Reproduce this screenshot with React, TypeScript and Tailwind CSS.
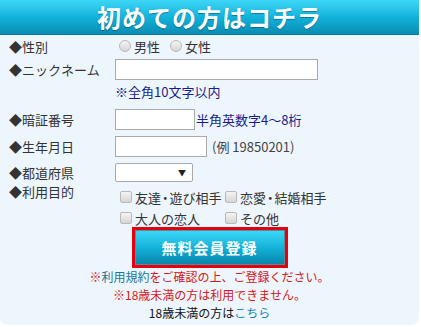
import type { ReactNode } from 'react';

const font = { fontFamily: '"Noto Sans CJK JP", "Liberation Sans", sans-serif' };

function Radio({ label }: { label: string }) {
  return (
    <span className="flex items-center gap-[3px] mr-[10px]">
      <span className="w-[12px] h-[12px] rounded-full border border-[#b9b9b9] bg-gradient-to-b from-[#f4f4f4] to-[#d6d6d6]" />
      <span>{label}</span>
    </span>
  );
}

function Check({ children, w }: { children: ReactNode; w: string }) {
  return (
    <span className={`flex items-center gap-[3px] shrink-0 whitespace-nowrap ${w}`}>
      <span className="w-[12px] h-[12px] shrink-0 rounded-[2px] border border-[#b9b9b9] bg-gradient-to-b from-[#f4f4f4] to-[#d6d6d6]" />
      <span>{children}</span>
    </span>
  );
}

// 中黒はプロポーショナル幅で
const Dot = () => <span className="[font-feature-settings:'palt'] mx-[1px]">・</span>;

function Label({ children }: { children: string }) {
  return <div className="w-[115px] shrink-0 pl-[9px]">◆{children}</div>;
}

export default function App() {
  return (
    <div style={font} className="w-[419px] h-[325px] bg-[#eef6fd] rounded-b-[8px] text-[13px] text-[#333] leading-none">
      <div className="h-[35px] bg-gradient-to-b from-[#3cd6f7] via-[#12b3dc] to-[#0a8db2] border-b border-[#0a7696] flex items-center justify-center">
        <span className="text-white text-[24px] font-bold tracking-[1px] [text-shadow:0_1px_1px_rgba(0,60,90,0.5)]">
          初めての方はコチラ
        </span>
      </div>

      <div className="flex items-center h-[20px] mt-[1px]">
        <Label>性別</Label>
        <div className="flex items-center pl-[4px]">
          <Radio label="男性" />
          <Radio label="女性" />
        </div>
      </div>

      <div className="flex items-center h-[21px] mt-[3px]">
        <Label>ニックネーム</Label>
        <div className="w-[203px] h-[21px] bg-white border border-[#a9a9a9]" />
      </div>

      <div className="flex items-center h-[16px] mt-[3px]">
        <div className="w-[115px] shrink-0" />
        <span className="text-[#1c1c8a]">※全角10文字以内</span>
      </div>

      <div className="flex items-center h-[21px] mt-[10px]">
        <Label>暗証番号</Label>
        <div className="w-[80px] h-[21px] bg-white border border-[#a9a9a9]" />
        <span className="ml-[1px] text-[#1c1c8a]">半角英数字4〜8桁</span>
      </div>

      <div className="flex items-center h-[21px] mt-[6px]">
        <Label>生年月日</Label>
        <div className="w-[92px] h-[21px] bg-white border border-[#a9a9a9]" />
        <span className="ml-[5px] text-[#444]">(例 19850201)</span>
      </div>

      <div className="flex items-center h-[19px] mt-[6px]">
        <Label>都道府県</Label>
        <div className="w-[78px] h-[19px] bg-white border border-[#a9a9a9] rounded-[2px] flex items-center justify-end pr-[6px]">
          <span className="text-[8px] text-[#222]">▼</span>
        </div>
      </div>

      <div className="flex mt-[2px]">
        <div className="w-[115px] shrink-0 pl-[9px] pt-[1px]">◆利用目的</div>
        <div className="pt-[4px] pl-[5px]">
          <div className="flex items-center h-[18px]">
            <Check w="w-[105px]">友達<Dot />遊び相手</Check>
            <Check w="">恋愛<Dot />結婚相手</Check>
          </div>
          <div className="flex items-center h-[18px] mt-[3px]">
            <Check w="w-[105px]">大人の恋人</Check>
            <Check w="">その他</Check>
          </div>
        </div>
      </div>

      <div className="flex justify-center">
        <div className="w-[156px] h-[41px] border-[3px] border-[#e3000f] bg-[#e3000f]">
          <div className="h-full border border-[#5a8a9a] bg-gradient-to-b from-[#3ad8f8] via-[#13b2da] to-[#0a86ac] flex items-center justify-center">
            <span className="text-white text-[15px] font-bold tracking-[1px]">無料会員登録</span>
          </div>
        </div>
      </div>

      <div className="text-[12px] text-center">
        <div className="h-[18px] flex items-center justify-center text-[#d51818]">
          ※<span className="text-[#1d7596]">利用規約</span>をご確認の上、ご登録ください。
        </div>
        <div className="h-[18px] flex items-center justify-center text-[#d51818]">
          ※18歳未満の方は利用できません。
        </div>
        <div className="h-[17px] flex items-center justify-center text-[#111]">
          18歳未満の方は<span className="text-[#1a86ad]">こちら</span>
        </div>
      </div>
    </div>
  );
}
